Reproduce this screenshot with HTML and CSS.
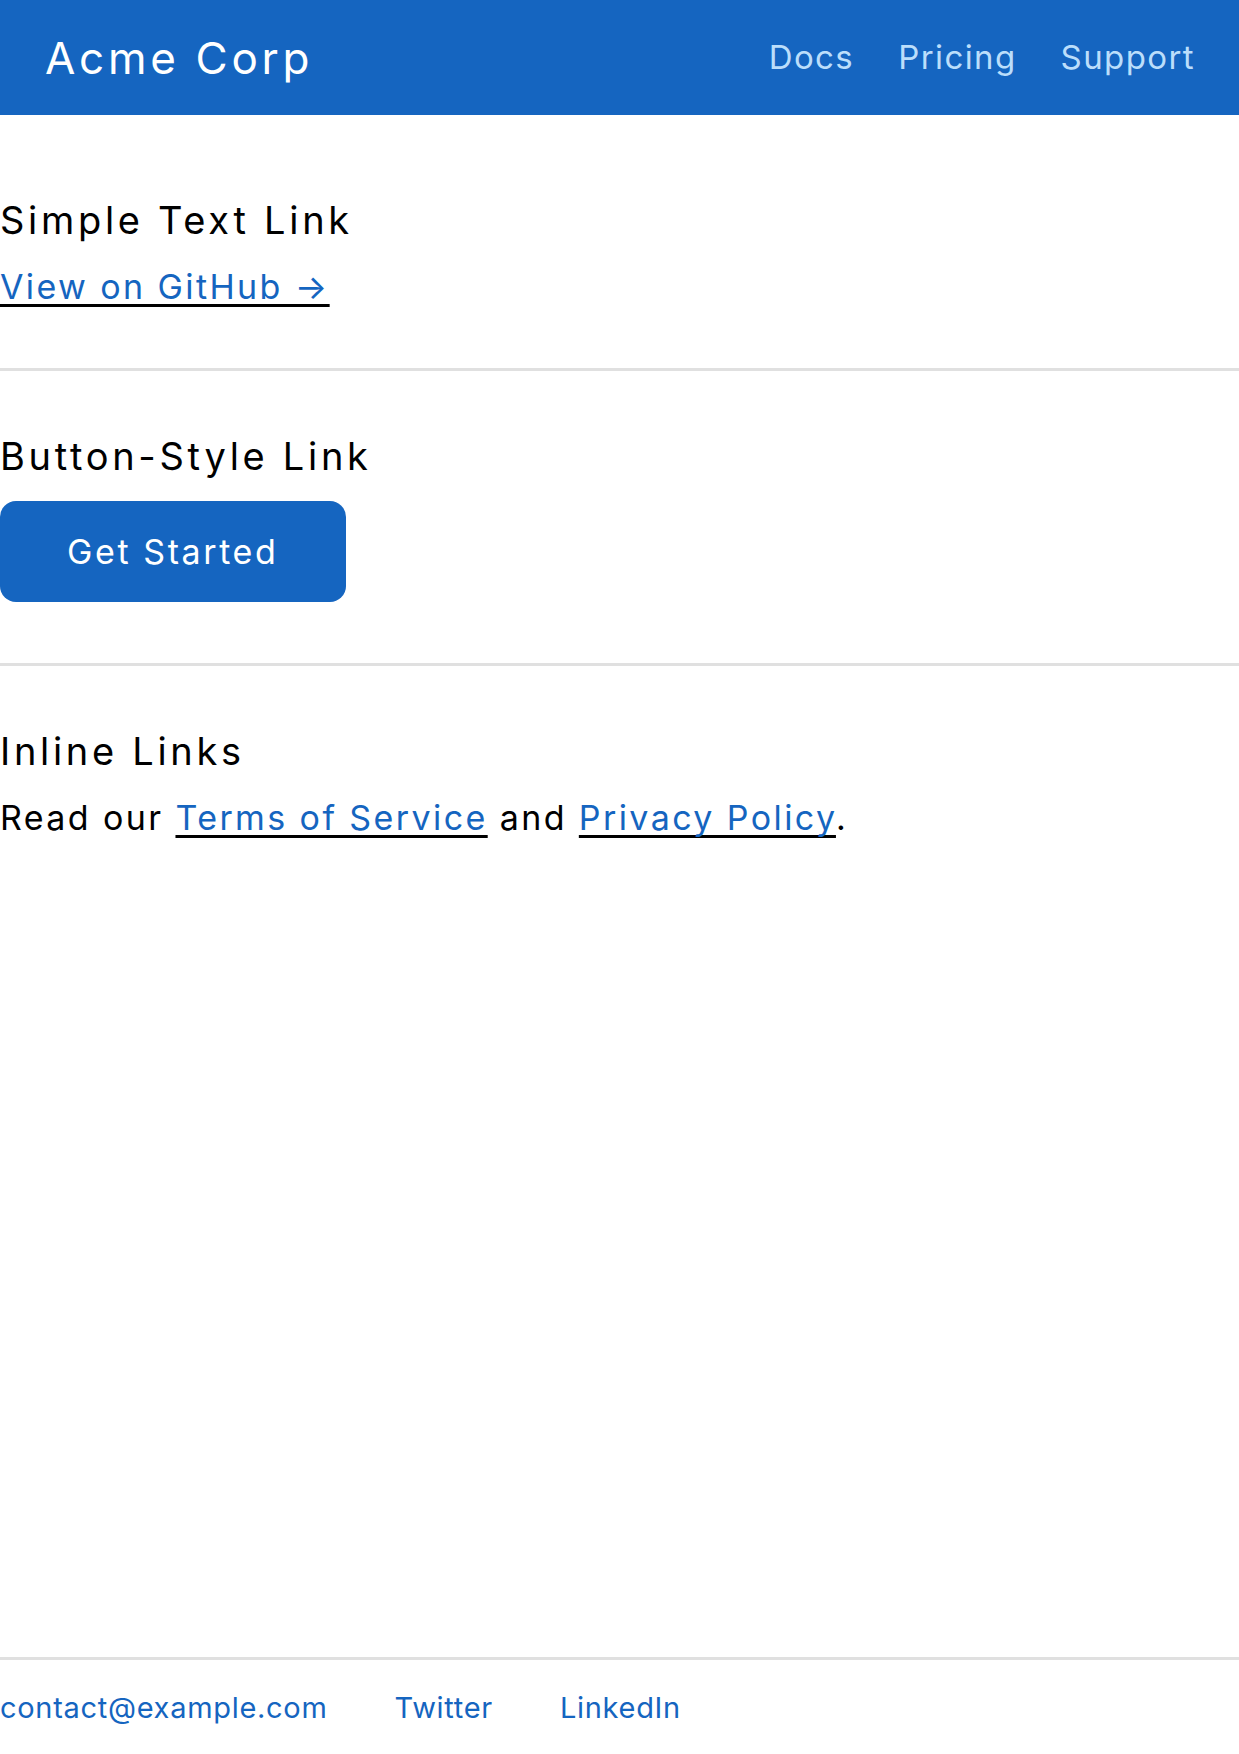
FILE: index.html
```html
<!DOCTYPE html>
<html lang="en">
<head>
<meta charset="utf-8">
<title>Acme Corp</title>
<link rel="stylesheet" href="styles.css">
</head>
<body>
<header class="site-header">
  <div class="brand">Acme Corp</div>
  <nav class="nav">
    <a href="#">Docs</a>
    <a href="#">Pricing</a>
    <a href="#">Support</a>
  </nav>
</header>
<main class="content">
  <section class="block first">
    <h2 class="block-title">Simple Text Link</h2>
    <p class="block-body"><a class="text-link" href="#">View on GitHub →</a></p>
  </section>
  <section class="block">
    <h2 class="block-title">Button-Style Link</h2>
    <div class="button-row"><a class="button-link" href="#">Get Started</a></div>
  </section>
  <section class="block last">
    <h2 class="block-title">Inline Links</h2>
    <p class="block-body">Read our <a class="text-link" href="#">Terms of Service</a> and <a class="text-link" href="#">Privacy Policy</a>.</p>
  </section>
</main>
<footer class="site-footer">
  <a href="#">contact@example.com</a>
  <a href="#">Twitter</a>
  <a href="#">LinkedIn</a>
</footer>
</body>
</html>
```
FILE: styles.css
```css
html, body {
  margin: 0;
  padding: 0;
}
body {
  font-family: Inter, "Noto Sans", "Liberation Sans", sans-serif;
  color: #000;
  background: #fff;
  min-height: 100vh;
  display: flex;
  flex-direction: column;
}
.site-header {
  height: 115px;
  box-sizing: border-box;
  padding: 0 44px 0 45px;
  background: #1565c0;
  display: flex;
  align-items: center;
  justify-content: space-between;
}
.brand {
  color: #fff;
  font-size: 44px;
  line-height: 1.2;
  letter-spacing: 3.7px;
  padding-top: 2px;
}
.nav {
  display: flex;
  gap: 44px;
}
.nav a {
  color: #bbdefb;
  text-decoration: none;
  font-size: 33px;
  line-height: 1.2;
  letter-spacing: 1.4px;
}
.content {
  flex: 1;
  padding-top: 20px;
}
.block {
  padding: 63px 0 56px;
  border-bottom: 3px solid #e0e0e0;
}
.block.last {
  border-bottom: none;
}
.block-title {
  margin: 0 0 17px;
  font-size: 38px;
  font-weight: 400;
  line-height: 1.2;
  letter-spacing: 3.7px;
}
.block-body {
  margin: 0;
  font-size: 34px;
  line-height: 1.5;
  letter-spacing: 2.4px;
}
.text-link {
  color: #1565c0;
  text-decoration: underline;
  text-decoration-color: #000;
  text-decoration-thickness: 3px;
  text-underline-offset: 5px;
  text-decoration-skip-ink: none;
}
.button-row {
  padding-top: 5px;
  padding-bottom: 5px;
}
.button-link {
  display: inline-block;
  background: #1565c0;
  color: #fff;
  text-decoration: none;
  font-size: 34px;
  line-height: 1.5;
  letter-spacing: 2.6px;
  padding: 25px 68px 25px 67px;
  border-radius: 16px;
}
.site-footer {
  border-top: 3px solid #e0e0e0;
  padding: 26px 0 25px;
  display: flex;
  gap: 67px;
}
.site-footer a {
  color: #1565c0;
  text-decoration: none;
  font-size: 29px;
  line-height: 1.5;
  letter-spacing: 0.7px;
}
```
